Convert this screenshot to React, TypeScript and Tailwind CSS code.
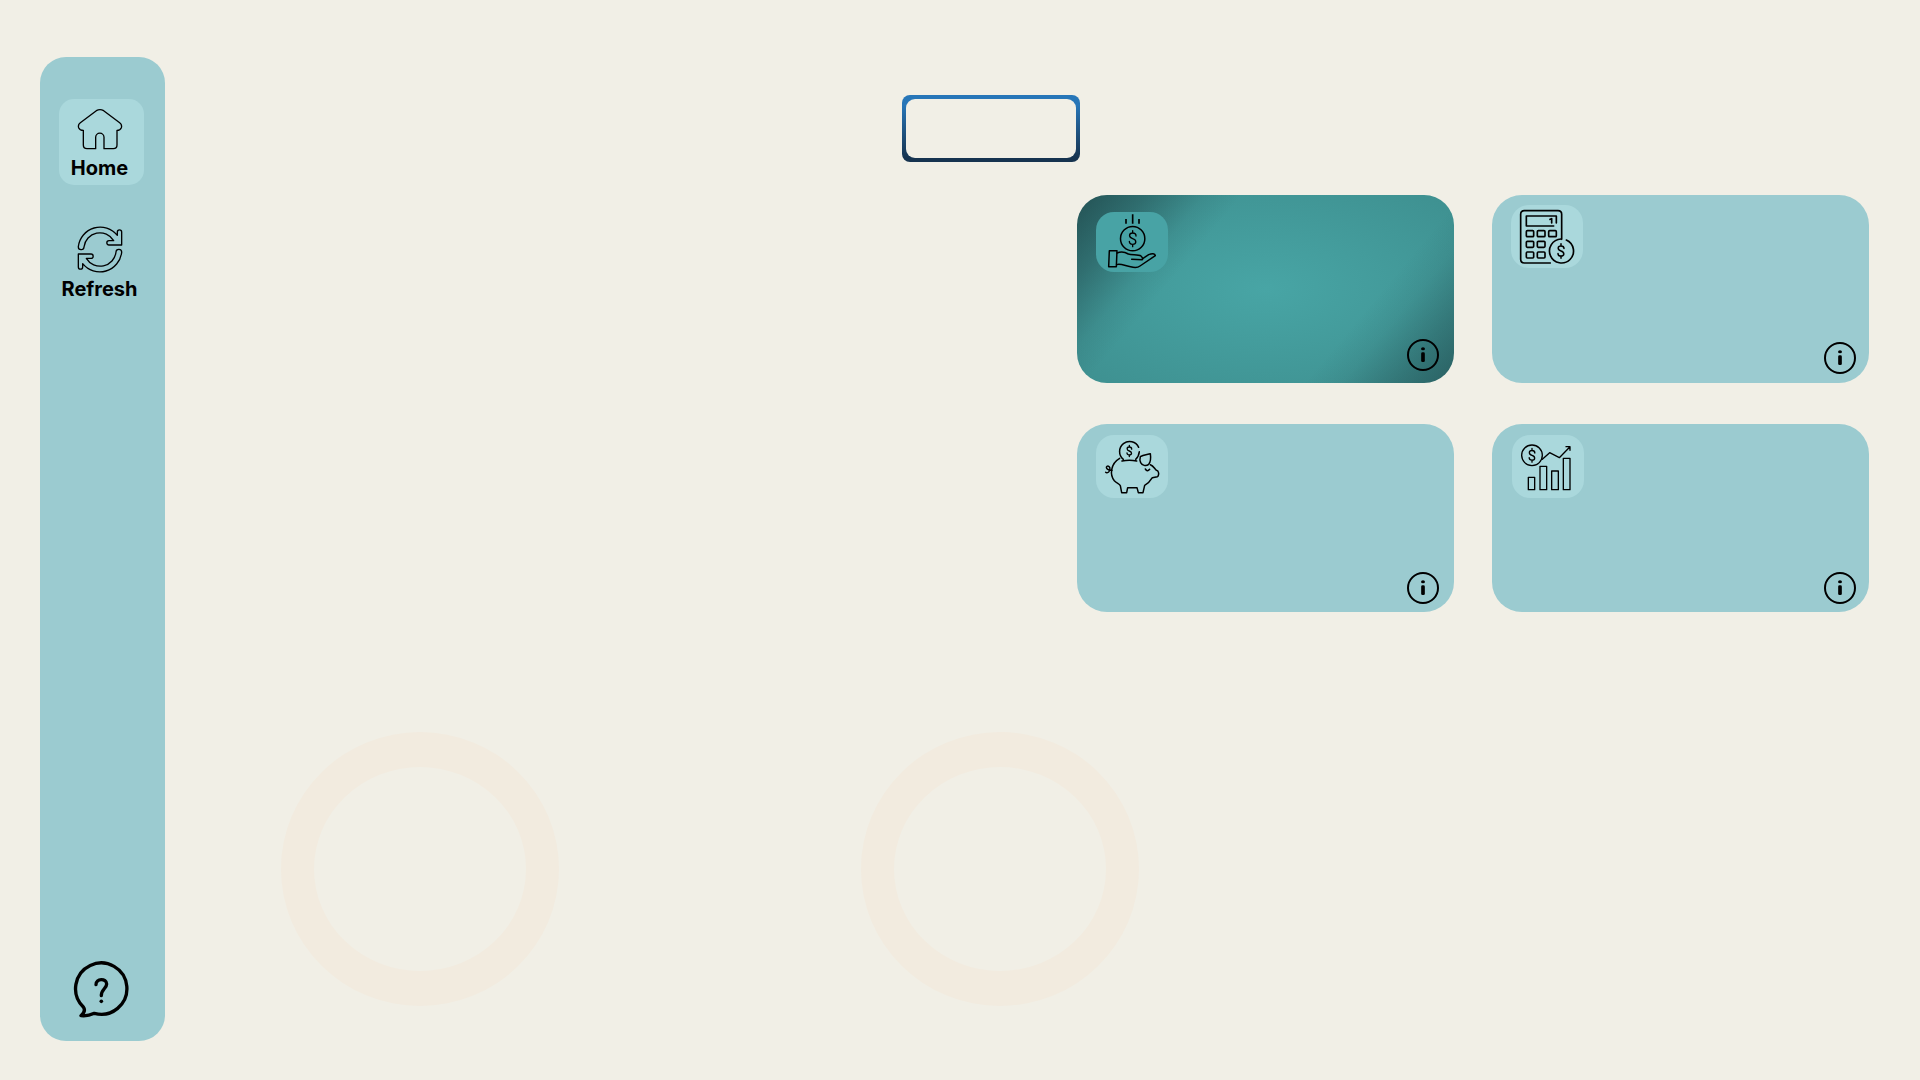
import type { ReactNode } from "react";

function Dollar({ x, y, scale = 1, width = 4 }: { x: number; y: number; scale?: number; width?: number }) {
  return (
    <path
      transform={`translate(${x} ${y}) scale(${scale})`}
      strokeWidth={width / scale}
      d="M10 -8C10 -15 5 -17 0 -17C-12 -17 -13 -4 0 0C13 4 12 17 0 17C-6 17 -10 14 -10 8M0 -24V-17M0 17V24"
    />
  );
}

function Drawing({ box, className, width = 4, children }: { box: string; className: string; width?: number; children: ReactNode }) {
  return (
    <svg viewBox={box} className={className} fill="none" stroke="#000" strokeWidth={width} strokeLinecap="round" strokeLinejoin="round" aria-hidden="true">
      {children}
    </svg>
  );
}

function HomeIcon() {
  return (
    <Drawing box="142 204 138 126" className="h-[42px] w-[46px]" width={4}>
      <path d="M200 212Q211 206 222 212L270 248Q278 254 275 263Q272 271 262 271V315Q262 326 251 326H223V292A12.5 12.5 0 0 0 198 292V326H172Q161 326 161 315V271Q150 271 147 263Q144 254 152 248Z" />
    </Drawing>
  );
}

function RefreshIcon() {
  const arrow = "M146 618A66 66 0 0 1 263 584V574A6.5 6.5 0 0 1 276 574V613H238A6.5 6.5 0 0 1 238 600H252A48 48 0 0 0 163 619A8.5 8.5 0 0 1 146 618Z";
  return (
    <Drawing box="142 556 138 141" className="h-[47px] w-[46px]" width={4}>
      <path d={arrow} />
      <path d={arrow} transform="rotate(180 211 626.5)" />
    </Drawing>
  );
}

function HelpIcon() {
  return (
    <Drawing box="129 122 171 171" className="size-[57px]" width={10}>
      <path d="M193 279A77 77 0 1 0 160 260C166 268 162 278 153 286C170 288 182 284 193 279Z" />
      <path d="M198 193C197 173 230 173 230 191C230 204 213 208 214 226" />
      <circle cx="214" cy="243" r="5.5" fill="#000" stroke="none" />
    </Drawing>
  );
}

function InfoIcon() {
  return (
    <Drawing box="-48 -48 96 96" className="size-8" width={6}>
      <circle r="45" />
      <rect x="-5.5" y="-8" width="11" height="29" rx="4" fill="#000" stroke="none" />
      <ellipse cy="-19" rx="6" ry="4.5" fill="#000" stroke="none" />
    </Drawing>
  );
}

function IncomeIcon() {
  return (
    <Drawing box="108 96 216 180" className="h-[60px] w-[72px]" width={4.5}>
      <path d="M218 103V131M198 117V131M237 117V131" strokeLinecap="butt" strokeWidth={5} />
      <circle cx="218" cy="176" r="36.5" />
      <Dollar x={218} y={176} />
      <path d="M148 212H171L169 260H146Z" />
      <path d="M171 219C185 213 195 216 205 222C215 226 235 222 243 228C247 232 249 236 247 239L215 238" />
      <path d="M248 236L266 224C276 220 285 220 286 227L240 258C232 264 222 263 212 260C195 257 180 250 170 254" />
    </Drawing>
  );
}

function BudgetIcon() {
  return (
    <Drawing box="93 60 216 189" className="h-[63px] w-[72px]" width={5}>
      <path d="M211 234H133Q122 234 122 223V88Q122 77 133 77H234Q245 77 245 88V163" />
      <path d="M221 123H139V93H229V114" />
      <path d="M210 103L215 101V114" />
      <rect x="139" y="137" width="22" height="18" rx="3" />
      <rect x="172" y="137" width="23" height="18" rx="3" />
      <rect x="206" y="137" width="23" height="18" rx="3" />
      <rect x="139" y="169" width="22" height="18" rx="3" />
      <rect x="172" y="169" width="23" height="18" rx="3" />
      <rect x="139" y="201" width="22" height="18" rx="3" />
      <rect x="172" y="201" width="23" height="18" rx="3" />
      <path d="M259 165A36 36 0 1 1 243 162" />
      <Dollar x={243} y={198} scale={0.9} width={4.5} />
    </Drawing>
  );
}

function SavingsIcon() {
  return (
    <Drawing box="78 60 216 189" className="h-[63px] w-[72px]" width={4.5}>
      <path d="M206 97A30 30 0 1 0 160 133M208 110C207 120 203 128 197 133M156 138Q178 133 200 138" />
      <Dollar x={178} y={108} scale={0.7} />
      <path d="M211 125C220 118 232 119 241 116C243 130 242 141 236 148C228 155 216 151 212 143C209 136 209 131 211 125Z" />
      <path d="M226 162Q232 172 239 163" />
      <path d="M149 130C121 146 119 180 133 197C140 205 149 206 151 212L155 233H170L173 218H201L205 233H219L224 211C235 205 241 198 247 188L262 185Q266 184 266 174Q265 167 258 165C253 160 250 152 241 149" />
      <path d="M126 166C115 167 105 159 111 154C119 150 124 164 116 171C112 174 109 174 107 172" />
    </Drawing>
  );
}

function InvestIcon() {
  return (
    <Drawing box="96 60 216 189" className="h-[63px] w-[72px]" width={4}>
      <circle cx="156" cy="121" r="31" />
      <Dollar x={156} y={121} scale={0.85} />
      <path d="M187 133L209 113L238 128L270 95M258 95H270V106" />
      <rect x="145" y="187" width="19" height="37" />
      <rect x="180" y="154" width="20" height="70" />
      <rect x="215" y="168" width="20" height="56" />
      <rect x="250" y="130" width="20" height="94" />
    </Drawing>
  );
}

function Card({ name, className, tile, icon }: { name: string; className: string; tile: string; icon: ReactNode }) {
  return (
    <article aria-label={name} className={`flex h-[188px] justify-between rounded-[30px] ${className}`}>
      <div className={`self-start overflow-hidden rounded-[18px] ${tile}`}>{icon}</div>
      <button type="button" aria-label={`About ${name}`} className="self-end rounded-full">
        <InfoIcon />
      </button>
    </article>
  );
}

function Ring() {
  return (
    <svg viewBox="0 0 278 274" className="h-[274px] w-[278px]" aria-hidden="true">
      <path
        fill="#f2ebdf"
        fillRule="evenodd"
        d="M0 137A139 137 0 1 1 278 137A139 137 0 1 1 0 137ZM33 137A106 102 0 1 0 245 137A106 102 0 1 0 33 137Z"
      />
    </svg>
  );
}

export default function App() {
  return (
    <div className="flex min-h-screen bg-[#f1efe6] pt-[57px] pr-[51px] pb-[39px] pl-10 font-['Inter',sans-serif] text-black">
      <nav className="flex w-[125px] shrink-0 flex-col items-center rounded-[26px] bg-[#9bcbd0] pt-[42px] pr-0.5 pb-[23px]">
        <a href="#home" className="flex h-[86px] w-[85px] flex-col items-center rounded-[15px] bg-[#aad8dc] pt-[9px] pr-1 text-xl leading-6 font-bold">
          <HomeIcon />
          <span className="mt-1.5">Home</span>
        </a>
        <button type="button" className="mt-[41px] flex flex-col items-center pr-1 text-xl leading-6 font-bold">
          <RefreshIcon />
          <span className="mt-1">Refresh</span>
        </button>
        <button type="button" aria-label="Help" className="mt-auto">
          <HelpIcon />
        </button>
      </nav>

      <main className="flex-1 pt-[38px]">
        <div className="grid grid-cols-[737fr_178fr_789fr]">
          <button
            type="button"
            aria-label="Select"
            className="col-start-2 h-[67px] rounded-lg bg-linear-to-b from-[#2776b8] from-15% to-[#16334f] to-95% p-1"
          >
            <span className="block h-full rounded-[9px] bg-[#f1efe6]" />
          </button>
        </div>

        <div className="mt-[33px] grid grid-cols-[912fr_792fr]">
          <section className="col-start-2 grid grid-cols-2 gap-x-[38px] gap-y-[41px]">
            <Card
              name="Income"
              className="bg-[linear-gradient(130deg,rgb(31_71_74/0.85)_0%,rgb(31_71_74/0.5)_13%,rgb(31_71_74/0.12)_24%,rgb(31_71_74/0)_31%,rgb(31_71_74/0)_72%,rgb(31_71_74/0.1)_79%,rgb(31_71_74/0.38)_89%,rgb(31_71_74/0.65)_100%),radial-gradient(ellipse_at_center,#48a5a5,#3e9090)] pt-[17px] pr-[15px] pb-3 pl-[19px]"
              tile="bg-[#48a3a5]"
              icon={<IncomeIcon />}
            />
            <Card name="Budget" className="bg-[#9bcbd0] pt-2.5 pr-[13px] pb-[9px] pl-[19px]" tile="bg-[#aad8dc]" icon={<BudgetIcon />} />
            <Card name="Savings" className="bg-[#9bcbd0] pt-[11px] pr-[15px] pb-2 pl-[19px]" tile="bg-[#aad8dc]" icon={<SavingsIcon />} />
            <Card name="Investments" className="bg-[#9bcbd0] pt-[11px] pr-[13px] pb-2 pl-5" tile="bg-[#aad8dc]" icon={<InvestIcon />} />
          </section>
        </div>

        <section className="mt-[120px] flex gap-[302px] pl-[116px]">
          <Ring />
          <Ring />
        </section>
      </main>
    </div>
  );
}
